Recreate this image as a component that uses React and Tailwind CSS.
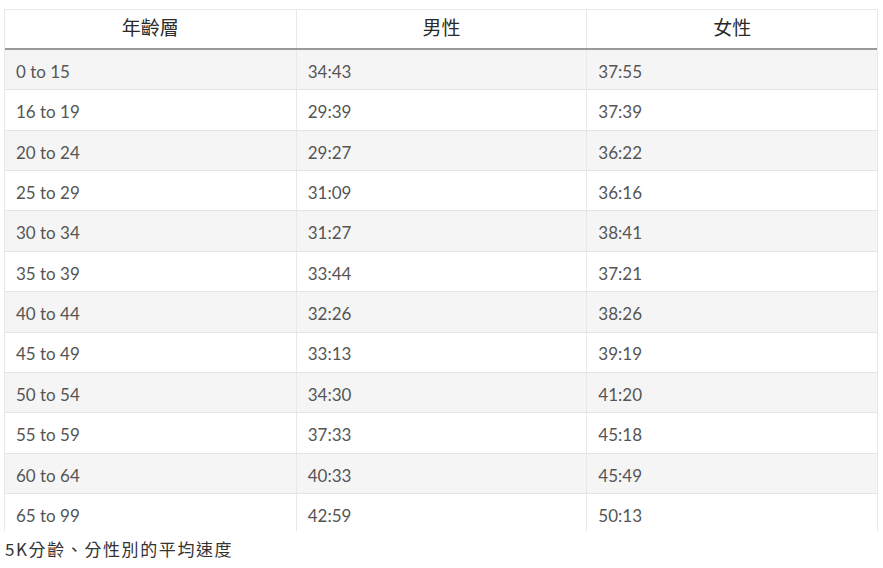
const rows = [
  ['0 to 15', '34:43', '37:55'],
  ['16 to 19', '29:39', '37:39'],
  ['20 to 24', '29:27', '36:22'],
  ['25 to 29', '31:09', '36:16'],
  ['30 to 34', '31:27', '38:41'],
  ['35 to 39', '33:44', '37:21'],
  ['40 to 44', '32:26', '38:26'],
  ['45 to 49', '33:13', '39:19'],
  ['50 to 54', '34:30', '41:20'],
  ['55 to 59', '37:33', '45:18'],
  ['60 to 64', '40:33', '45:49'],
  ['65 to 99', '42:59', '50:13'],
];

const cols = ['w-[292px]', 'w-[291px]', 'w-[290px]'];

export default function App() {
  return (
    <div className="bg-white w-[883px] h-[568px] pt-[9px] pl-[4px]">
      {/* table picture, cut off at the bottom */}
      <div className="h-[522px] overflow-hidden w-[874px] border-l border-r border-t border-[#e8e8e8]">
        <div className="flex h-[40px] border-b-[2px] border-[#9a9a9a] font-['Noto_Sans_CJK_TC',sans-serif] text-[19px] text-[#2a2a2a]">
          {['年齡層', '男性', '女性'].map((h, i) => (
            <div key={h} className={`${cols[i]} flex items-center justify-center pb-[3px] ${i < 2 ? 'border-r border-[#e8e8e8]' : ''}`}>
              {h}
            </div>
          ))}
        </div>
        {rows.map((r, ri) => (
          <div
            key={r[0]}
            className={`flex h-[40.36px] border-b border-[#e4e4e4] font-['Lato',sans-serif] text-[17px] text-[#555] ${ri % 2 === 0 ? 'bg-[#f5f5f5]' : 'bg-white'}`}
          >
            {r.map((c, i) => (
              <div key={i} className={`${cols[i]} flex items-center pl-[11px] pt-[4px] ${i < 2 ? 'border-r border-[#e8e8e8]' : ''}`}>
                {c}
              </div>
            ))}
          </div>
        ))}
      </div>
      <p className="mt-[9px] ml-[1px] font-['Noto_Sans_CJK_TC',sans-serif] text-[17px] tracking-[1.6px] text-[#333] leading-none">
        5K分齡、分性別的平均速度
      </p>
    </div>
  );
}
